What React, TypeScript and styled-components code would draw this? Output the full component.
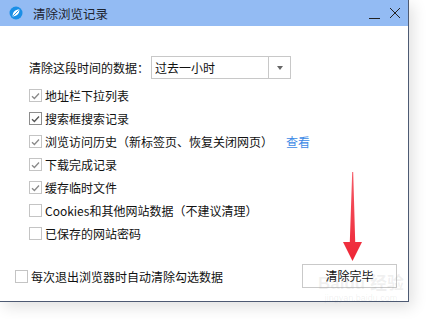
import React from 'react';
import styled, { createGlobalStyle } from 'styled-components';

const GlobalStyle = createGlobalStyle`
    html, body {
        margin: 0;
        padding: 0;
        background: #fff;
    }
    body {
        font-family: "Noto Sans CJK SC", "Liberation Sans", sans-serif;
        font-size: 12px;
        color: #111;
    }
`;

const Page = styled.div`
    width: 434px;
    height: 319px;
    overflow: hidden;
    background: #fff;
`;

const Window = styled.div`
    position: relative;
    width: 408px;
    height: 301px;
    display: flex;
    flex-direction: column;
    background: #fff;
    border-right: 1px solid #4d5a73;
    border-bottom: 1px solid #4d5a73;
    box-shadow: 4px 5px 14px rgba(0, 0, 0, 0.12);
`;

const TitleBar = styled.div`
    height: 26px;
    flex-shrink: 0;
    display: flex;
    align-items: center;
    padding-left: 9px;
    background: #93bbf3;
`;

const Title = styled.span`
    margin-left: 10px;
    font-size: 12.5px;
    color: #1d2430;
`;

const TitleButtons = styled.div`
    margin-left: auto;
    display: flex;
    align-items: center;
    gap: 9px;
    padding-right: 7px;
`;

const Body = styled.div`
    flex: 1;
    display: flex;
    flex-direction: column;
    padding: 30px 11px 0 29px;
`;

const TimeRow = styled.div`
    display: flex;
    align-items: center;
    gap: 2px;
    margin-bottom: 5px;
`;

const Select = styled.div`
    width: 138px;
    height: 21px;
    display: flex;
    border: 1px solid #c8c8c8;
`;

const SelectValue = styled.div`
    flex: 1;
    display: flex;
    align-items: center;
    padding-left: 3px;
`;

const SelectArrow = styled.div`
    width: 21px;
    border-left: 1px solid #c8c8c8;
    display: flex;
    align-items: center;
    justify-content: center;
    &::after {
        content: '';
        border-left: 3.5px solid transparent;
        border-right: 3.5px solid transparent;
        border-top: 4px solid #666;
    }
`;

const List = styled.div`
    display: flex;
    flex-direction: column;
`;

const Row = styled.label`
    height: 23px;
    display: flex;
    align-items: center;
    gap: 3px;
`;

const Box = styled.span<{ $dark?: boolean }>`
    width: 11px;
    height: 11px;
    flex-shrink: 0;
    display: flex;
    align-items: center;
    justify-content: center;
    border: 1px solid ${p => (p.$dark ? '#8d8d8d' : '#c4c4c4')};
    background: #fff;
`;

const ViewLink = styled.a`
    margin-left: 10px;
    color: #3d8ae6;
    text-decoration: none;
`;

const Footer = styled.div`
    display: flex;
    align-items: center;
    justify-content: space-between;
    margin-top: 18px;
    margin-left: -14px;
`;

const FooterCheck = styled(Row)`
    margin-top: 2px;
`;

const Button = styled.button`
    width: 95px;
    height: 24px;
    border: 1px solid #c9c9c9;
    background: #fff;
    font-family: inherit;
    font-size: 12px;
    color: #111;
    padding: 0;
`;

const Arrow = styled.svg`
    position: absolute;
    left: 342px;
    top: 172px;
`;

const Watermark = styled.div`
    position: absolute;
    left: 318px;
    top: 274px;
    display: flex;
    flex-direction: column;
    align-items: center;
    white-space: nowrap;
    color: rgba(140, 140, 140, 0.13);
    pointer-events: none;
`;

const MarkBig = styled.span`
    font-family: "Liberation Sans", "Noto Sans CJK SC", sans-serif;
    font-size: 17px;
    font-weight: bold;
    line-height: 19px;
`;

const MarkSmall = styled.span`
    font-family: "Liberation Sans", sans-serif;
    font-size: 9px;
    line-height: 11px;
`;

function Check({ checked, dark }: { checked?: boolean; dark?: boolean }) {
    return (
        <Box $dark={dark}>
            {checked && (
                <svg width="9" height="8" viewBox="0 0 9 8">
                    <path d="M1 4.2 L3.4 6.5 L8 1.5" fill="none" stroke={dark ? '#555' : '#8a8a8a'} strokeWidth="1.3" />
                </svg>
            )}
        </Box>
    );
}

const items: { text: string; checked: boolean; dark?: boolean; link?: boolean }[] = [
    { text: '地址栏下拉列表', checked: true },
    { text: '搜索框搜索记录', checked: true, dark: true },
    { text: '浏览访问历史（新标签页、恢复关闭网页）', checked: true, link: true },
    { text: '下载完成记录', checked: true },
    { text: '缓存临时文件', checked: true },
    { text: 'Cookies和其他网站数据（不建议清理）', checked: false },
    { text: '已保存的网站密码', checked: false },
];

export default function App(): JSX.Element {
    return (
        <Page>
            <GlobalStyle />
            <Window>
                <TitleBar>
                    <svg width="14" height="14" viewBox="0 0 14 14">
                        <circle cx="7" cy="7" r="6.5" fill="#1b8fe6" />
                        <path d="M3.6 10.4 C3.6 6 6 3.6 10.4 3.6 C10.4 8 8 10.4 3.6 10.4 Z" fill="#fff" />
                        <path d="M4.2 9.8 L9.6 4.4" stroke="#1b8fe6" strokeWidth="0.9" />
                    </svg>
                    <Title>清除浏览记录</Title>
                    <TitleButtons>
                        <svg width="12" height="12" viewBox="0 0 12 12">
                            <path d="M1 11.5 H12" stroke="#222" strokeWidth="1" />
                        </svg>
                        <svg width="12" height="12" viewBox="0 0 12 12">
                            <path d="M1 1 L11 11 M11 1 L1 11" stroke="#222" strokeWidth="1" />
                        </svg>
                    </TitleButtons>
                </TitleBar>
                <Body>
                    <TimeRow>
                        <span>清除这段时间的数据：</span>
                        <Select>
                            <SelectValue>过去一小时</SelectValue>
                            <SelectArrow />
                        </Select>
                    </TimeRow>
                    <List>
                        {items.map(item => (
                            <Row key={item.text}>
                                <Check checked={item.checked} dark={item.dark} />
                                <span>{item.text}</span>
                                {item.link && <ViewLink href="#">查看</ViewLink>}
                            </Row>
                        ))}
                    </List>
                    <Footer>
                        <FooterCheck>
                            <Check />
                            <span>每次退出浏览器时自动清除勾选数据</span>
                        </FooterCheck>
                        <Button>清除完毕</Button>
                    </Footer>
                </Body>
                <Watermark>
                    <MarkBig>Baidu 经验</MarkBig>
                    <MarkSmall>jingyan.baidu.com</MarkSmall>
                </Watermark>
                <Arrow width="22" height="90" viewBox="0 0 22 90">
                    <defs>
                        <linearGradient id="arrowFill" x1="0" y1="0" x2="0" y2="1">
                            <stop offset="0" stopColor="#f55a66" />
                            <stop offset="1" stopColor="#ee2535" />
                        </linearGradient>
                    </defs>
                    <path d="M10.2 0 L11.2 0 L13.2 70 L20 70 L10.5 89 L1 70 L7.8 70 Z" fill="url(#arrowFill)" />
                </Arrow>
            </Window>
        </Page>
    );
}
